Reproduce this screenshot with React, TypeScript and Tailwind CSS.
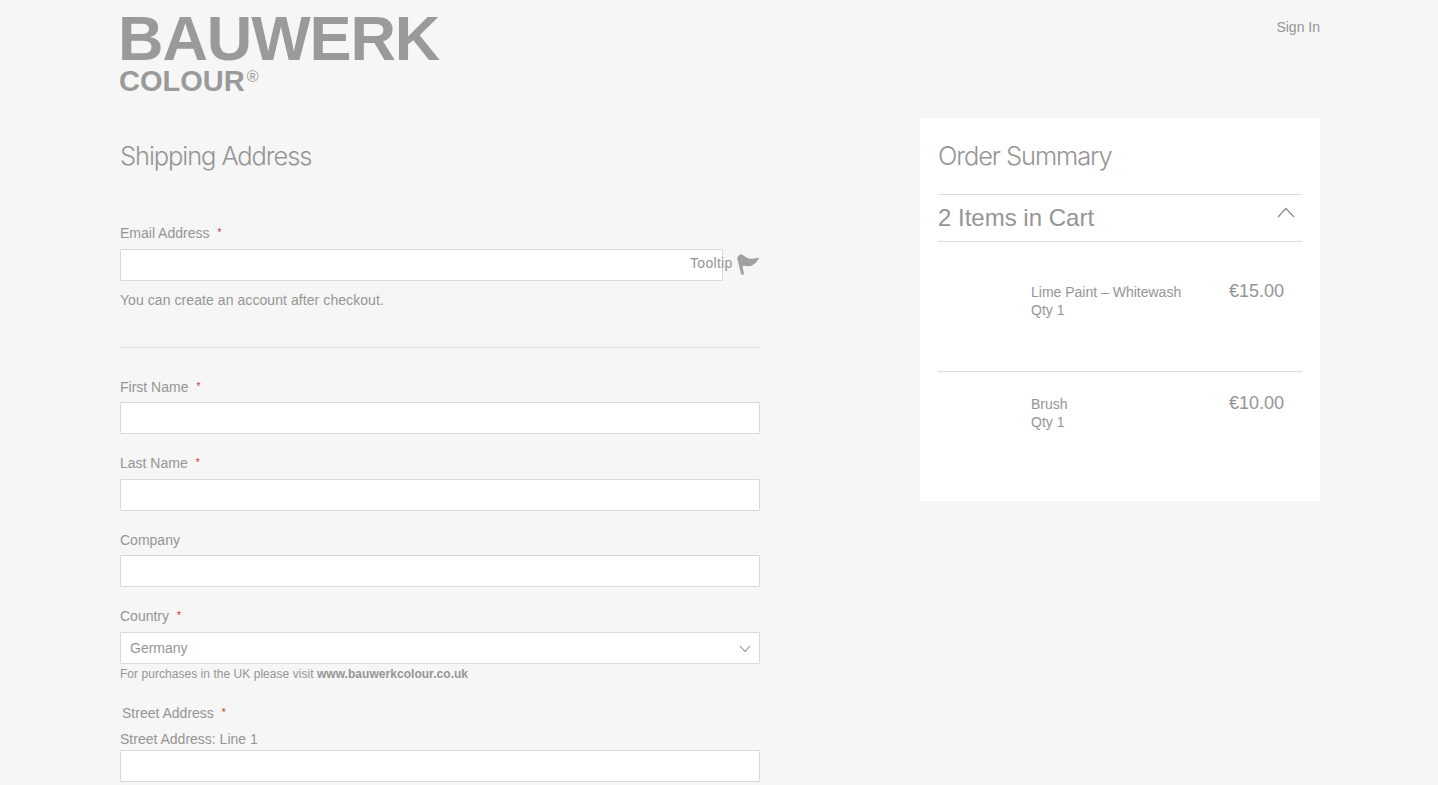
const sans = "font-['Liberation_Sans',Arial,sans-serif]";

const Label = ({ text, required, className = "" }: { text: string; required?: boolean; className?: string }) => (
  <label className={`flex h-5 items-center text-sm leading-5 text-[#959595] ${className}`}>
    {text}
    {required && <span className="ml-[8px] text-[10px] text-[#c9302c]">*</span>}
  </label>
);

const TextInput = () => (
  <input type="text" className="block h-8 w-full rounded-[1px] border border-[#d9d9d9] bg-white px-2.5 text-sm outline-none" />
);

const Field = ({ label, required, wide }: { label: string; required?: boolean; wide?: boolean }) => (
  <div className={`mb-[19px] flex flex-col ${wide ? "gap-[6px]" : "gap-[5px]"}`}>
    <Label text={label} required={required} />
    <TextInput />
  </div>
);

const Flag = () => (
  <svg width="23" height="22" viewBox="0 0 23 22" className="fill-[#a0a0a0]">
    <path d="M0.2 4.2 C1 2.2 2.2 0.6 3.4 0.2 C6 0.4 8.4 3.2 11 4.2 C14.5 5.2 18.5 4.8 22.4 3.6 C20.6 7.2 17.2 11 13.6 12 C10.8 12.8 8 11.4 5.6 11.8 L7 20.4 L4.2 20.8 Z" />
  </svg>
);

const CartItem = ({ name, price, divider }: { name: string; price: string; divider?: boolean }) => (
  <div className={`flex items-start justify-between pr-[18px] ${divider ? "h-[130px] border-t border-[#dcdcdc] pt-[23px]" : "h-[129px] pt-[41px]"}`}>
    <div className="ml-[93px] text-sm leading-[18px] text-[#959595]">
      <p>{name}</p>
      <p>Qty 1</p>
    </div>
    <span className="-mt-px text-lg leading-[18px] text-[#959595]">{price}</span>
  </div>
);

export default function App() {
  return (
    <div className={`h-[785px] overflow-hidden bg-[#f6f6f6] ${sans}`}>
      <div className="ml-[120px] w-[1200px]">
        <header className="flex h-[118px] items-start justify-between">
          <div className="pt-[7px] font-bold text-[#9a9a9a]">
            <div className="-ml-[2px] h-[63px] text-[63px] leading-[63px] tracking-[-1.1px]">BAUWERK</div>
            <div className="-ml-px flex h-[22px] items-start text-[29px] leading-[22px]">
              COLOUR
              <span className="ml-[2px] text-[16px] font-normal leading-[14px]">®</span>
            </div>
          </div>
          <a className="mt-[17px] text-sm leading-5 text-[#959595]">Sign In</a>
        </header>

        <div className="flex items-start justify-between">
          <main className="w-[640px]">
            <h1 className="mb-[48px] mt-[19px] font-['Inter',sans-serif] text-[25.5px] font-light leading-[38px] tracking-[-1.1px] text-[#959595]">
              Shipping Address
            </h1>

            <div className="flex flex-col gap-[6px]">
              <Label text="Email Address" required />
              <div className="relative w-[603px]">
                <TextInput />
                <span className="absolute left-[570px] top-[4px] text-sm leading-5 tracking-[0.3px] text-[#959595]">Tooltip</span>
                <span className="absolute left-[617px] top-[5px]">
                  <Flag />
                </span>
              </div>
            </div>
            <p className="mt-[9px] text-sm leading-5 tracking-[0.07px] text-[#959595]">You can create an account after checkout.</p>
            <hr className="mb-[29px] mt-[37px] border-[#dcdcdc]" />

            <Field label="First Name" required />
            <Field label="Last Name" required wide />
            <Field label="Company" />

            <div className="flex flex-col gap-[6px]">
              <Label text="Country" required />
              <div className="relative">
                <select className="block h-8 w-full appearance-none rounded-[1px] border border-[#d9d9d9] bg-white px-[9px] text-sm text-[#959595] outline-none">
                  <option>Germany</option>
                </select>
                <svg width="12" height="8" viewBox="0 0 12 8" fill="none" className="absolute right-[9px] top-[13px] stroke-[#8a8a8a]">
                  <path d="M1 1 L6 6.5 L11 1" strokeWidth="1.1" />
                </svg>
              </div>
            </div>
            <p className="text-xs leading-5 tracking-[0.04px] text-[#959595]">
              For purchases in the UK please visit <strong className="font-bold">www.bauwerkcolour.co.uk</strong>
            </p>

            <Label text="Street Address" required className="ml-[2px] mt-[19px]" />
            <div className="mt-[6px] flex flex-col gap-[1px]">
              <Label text="Street Address: Line 1" />
              <TextInput />
            </div>
          </main>

          <aside className="h-[383px] w-[400px] bg-white px-[18px]">
            <h2 className="mb-[19px] mt-[19px] font-['Inter',sans-serif] text-[25.5px] font-light leading-[38px] tracking-[-1.1px] text-[#959595]">
              Order Summary
            </h2>
            <div className="flex h-12 items-center justify-between border-y border-[#dcdcdc] pr-[7px]">
              <span className="text-2xl text-[#959595]">2 Items in Cart</span>
              <svg width="18" height="11" viewBox="0 0 18 11" fill="none" className="-mt-[12px] stroke-[#8a8a8a]">
                <path d="M1 10 L9 1.5 L17 10" strokeWidth="1.2" />
              </svg>
            </div>
            <CartItem name="Lime Paint – Whitewash" price="€15.00" />
            <CartItem name="Brush" price="€10.00" divider />
          </aside>
        </div>
      </div>
    </div>
  );
}
